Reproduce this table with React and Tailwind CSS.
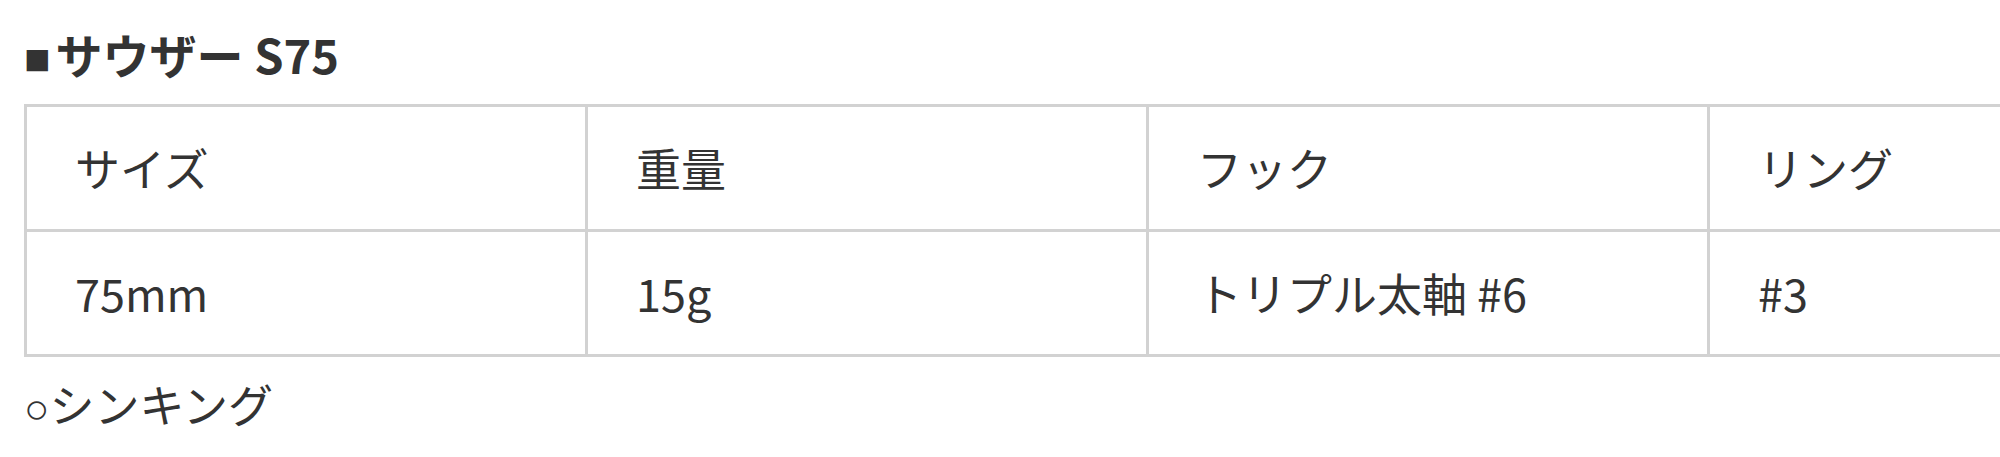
import React from "react";

const specs = {
  headers: ["サイズ", "重量", "フック", "リング"],
  values: ["75mm", "15g", "トリプル太軸 #6", "#3"],
};

const cell =
  "w-[561px] h-[125px] border-[3px] border-[#d2d2d2] pl-[48px] text-left align-middle font-normal";

const App = () => {
  return (
    <div
      className="w-[2000px] h-[457px] overflow-hidden bg-white text-[#333] pl-[24px] pt-[19px]"
      style={{ fontFamily: '"Noto Sans CJK JP", "Noto Sans", sans-serif' }}
    >
      {/* Title */}
      <h2 className="text-[47px] font-bold leading-[70px] mb-[10px] whitespace-nowrap">
        <span className="font-['Liberation_Sans'] text-[44px] mr-[5px]">■</span>
        サウザー S75
      </h2>

      {/* Spec table */}
      <table className="table-fixed border-collapse w-[2244px] text-[45px] leading-[1.5]">
        <tbody>
          <tr>
            {specs.headers.map((h) => (
              <td key={h} className={cell}>
                {h}
              </td>
            ))}
          </tr>
          <tr>
            {specs.values.map((v) => (
              <td key={v} className={cell}>
                {v}
              </td>
            ))}
          </tr>
        </tbody>
      </table>

      <p className="mt-[12px] text-[45px] leading-[70px] whitespace-nowrap">
        <span className="font-['Liberation_Sans'] text-[42px]">○</span>
        シンキング
      </p>
    </div>
  );
};

export default App;
